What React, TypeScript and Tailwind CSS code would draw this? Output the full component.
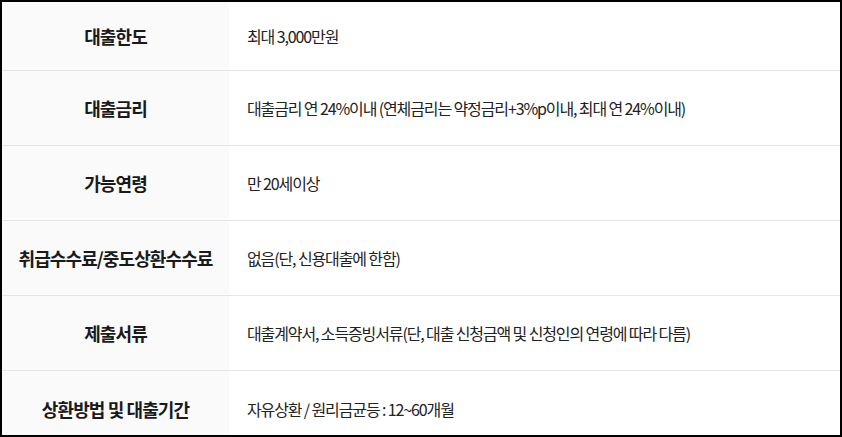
import React from 'react'

const rows: { label: string; value: string; h: string; pad?: string }[] = [
  { label: '대출한도', value: '최대 3,000만원', h: 'h-[69px]' },
  { label: '대출금리', value: '대출금리 연 24%이내 (연체금리는 약정금리+3%p이내, 최대 연 24%이내)', h: 'h-[75px]' },
  { label: '가능연령', value: '만 20세이상', h: 'h-[75px]' },
  { label: '취급수수료/중도상환수수료', value: '없음(단, 신용대출에 한함)', h: 'h-[75px]' },
  { label: '제출서류', value: '대출계약서, 소득증빙서류(단, 대출 신청금액 및 신청인의 연령에 따라 다름)', h: 'h-[75px]' },
  { label: '상환방법 및 대출기간', value: '자유상환 / 원리금균등 : 12~60개월', h: 'h-[64px]', pad: 'pt-[12px]' },
]

export default function App() {
  return (
    <div
      className="w-[842px] h-[437px] bg-white border-2 border-black overflow-hidden flex flex-col"
      style={{ fontFamily: '"Noto Sans CJK KR", "Noto Sans", sans-serif' }}
    >
      {rows.map((r, i) => (
        <div
          key={r.label}
          className={`flex shrink-0 ${r.h} ${i < rows.length - 1 ? 'border-b border-[#e6e6e6]' : ''}`}
        >
          <div className={`w-[227px] shrink-0 bg-[#fafafa] flex items-center justify-center ${r.pad ?? ''}`}>
            <span className="text-[18px] font-bold text-[#1a1a1a] tracking-[-0.05em]">{r.label}</span>
          </div>
          <div className={`flex-1 flex items-center pl-[18px] ${r.pad ?? ''}`}>
            <span className="text-[16px] text-[#222] tracking-[-0.07em]">{r.value}</span>
          </div>
        </div>
      ))}
    </div>
  )
}
